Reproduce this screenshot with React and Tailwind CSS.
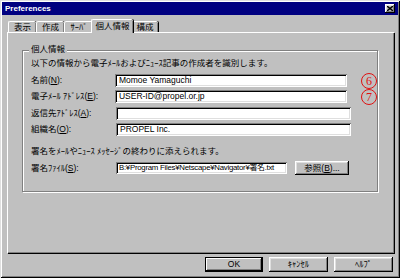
const font = "font-['Liberation_Sans','Noto_Sans_CJK_JP',sans-serif]";

const raised =
  'shadow-[inset_-1px_-1px_0_#000,inset_1px_1px_0_#fff,inset_-2px_-2px_0_#808080,inset_2px_2px_0_#dfdfdf]';
const sunken =
  'shadow-[inset_1px_1px_0_#808080,inset_-1px_-1px_0_#fff,inset_2px_2px_0_#000,inset_-2px_-2px_0_#dfdfdf]';

function Mn({ pre, k, post = '):' }) {
  return (
    <span>
      {pre}(<span className="underline underline-offset-1">{k}</span>{post}
    </span>
  );
}

function Tab({ label, w, active }) {
  return (
    <div
      className={`${w} flex items-center justify-center rounded-t-[2px] bg-[#c0c0c0] border-t border-l border-white shadow-[inset_-1px_0_0_#808080,1px_0_0_#000] ${
        active ? 'h-[14px] -mx-[2px] z-10 relative -mb-[1px] pb-[1px]' : 'h-[11px]'
      }`}
    >
      <span className="leading-none">{label}</span>
    </div>
  );
}

function Field({ label, value, mark }) {
  return (
    <div className="flex items-center h-[13px]">
      <div className="w-[85px] leading-none">{label}</div>
      <div className={`w-[235px] h-[13px] bg-white ${sunken} flex items-center pl-[4px] leading-none`}>
        {value}
      </div>
      {mark && (
        <div className="ml-[14px] w-[16px] h-[16px] shrink-0 rounded-full border-[1.5px] border-[#e01010] flex items-center justify-center text-[12px] leading-none text-[#e01010] font-['Liberation_Serif',serif]">
          {mark}
        </div>
      )}
    </div>
  );
}

function Button({ children, w, def }) {
  return (
    <div
      className={`${w} h-[15px] flex items-center justify-center leading-none ${
        def
          ? 'shadow-[inset_0_0_0_1px_#000,inset_-2px_-2px_0_#000,inset_2px_2px_0_#fff,inset_-3px_-3px_0_#808080]'
          : raised
      }`}
    >
      {children}
    </div>
  );
}

export default function App() {
  return (
    <div
      className={`${font} text-[8.5px] text-black w-[400px] h-[278px] bg-[#c0c0c0] overflow-hidden shadow-[inset_1px_1px_0_#dfdfdf,inset_-1px_-1px_0_#000,inset_2px_2px_0_#fff,inset_-2px_-2px_0_#808080]`}
    >
      <div className="mx-[2px] mt-[2px] h-[13px] bg-[#000080] flex items-center justify-between pl-[3px] pr-[3px]">
        <span className="text-white font-bold text-[8px] leading-none">Preferences</span>
        <div className={`w-[10px] h-[9px] bg-[#c0c0c0] ${raised} flex items-center justify-center`}>
          <svg width="6" height="5" viewBox="0 0 6 5">
            <path d="M0 0 L6 5 M6 0 L0 5" stroke="#000" strokeWidth="1.4" />
          </svg>
        </div>
      </div>

      <div className="ml-[8px] mt-[4px] h-[13px] flex items-end">
        <Tab label="表示" w="w-[28px]" />
        <Tab label="作成" w="w-[28px]" />
        <Tab label="ｻｰﾊﾞ" w="w-[29px]" />
        <Tab label="個人情報" w="w-[42px]" active />
        <Tab label="構成" w="w-[27px]" />
      </div>

      <div className="ml-[7px] w-[387px] h-[221px] border-t border-l border-white shadow-[inset_-1px_-1px_0_#808080,1px_1px_0_#000] pl-[14px] pt-[17px]">
        <div className="relative w-[356px] h-[142px] border border-[#808080] shadow-[1px_1px_0_#fff,inset_1px_1px_0_#fff] pl-[8px] pt-[7px]">
          <div className="absolute -top-[6px] left-[6px] px-[2px] bg-[#c0c0c0] leading-none">個人情報</div>
          <div className="h-[10px] leading-[10px]">以下の情報から電子ﾒｰﾙおよびﾆｭｰｽ記事の作成者を識別します。</div>
          <div className="mt-[6px]">
            <Field label={<Mn pre="名前" k="N" />} value="Momoe Yamaguchi" mark="6" />
          </div>
          <div className="mt-[3px]">
            <Field label={<Mn pre="電子ﾒｰﾙ ｱﾄﾞﾚｽ" k="E" />} value="USER-ID@propel.or.jp" mark="7" />
          </div>
          <div className="mt-[4px]">
            <Field label={<Mn pre="返信先ｱﾄﾞﾚｽ" k="A" />} value="" />
          </div>
          <div className="mt-[3px]">
            <Field label={<Mn pre="組織名" k="O" />} value="PROPEL Inc." />
          </div>
          <div className="mt-[10px] h-[10px] leading-[10px]">署名をﾒｰﾙやﾆｭｰｽ ﾒｯｾｰｼﾞの終わりに添えられます。</div>
          <div className="mt-[5px] h-[14px] flex items-center">
            <div className="w-[85px] leading-none">
              <Mn pre="署名ﾌｧｲﾙ" k="S" />
            </div>
            <div className={`w-[171px] h-[12px] bg-white ${sunken} flex items-center pl-[3px] text-[7.8px] tracking-[-0.25px] leading-none whitespace-nowrap overflow-hidden`}>
              B:¥Program Files¥Netscape¥Navigator¥署名.txt
            </div>
            <div className={`ml-[8px] w-[54px] h-[14px] ${raised} flex items-center justify-center leading-none`}>
              <Mn pre="参照" k="B" post=")..." />
            </div>
          </div>
        </div>
      </div>

      <div className="mt-[4px] pr-[7px] flex justify-end gap-[6px]">
        <Button w="w-[58px]" def>OK</Button>
        <Button w="w-[59px]">ｷｬﾝｾﾙ</Button>
        <Button w="w-[59px]">ﾍﾙﾌﾟ</Button>
      </div>
    </div>
  );
}
